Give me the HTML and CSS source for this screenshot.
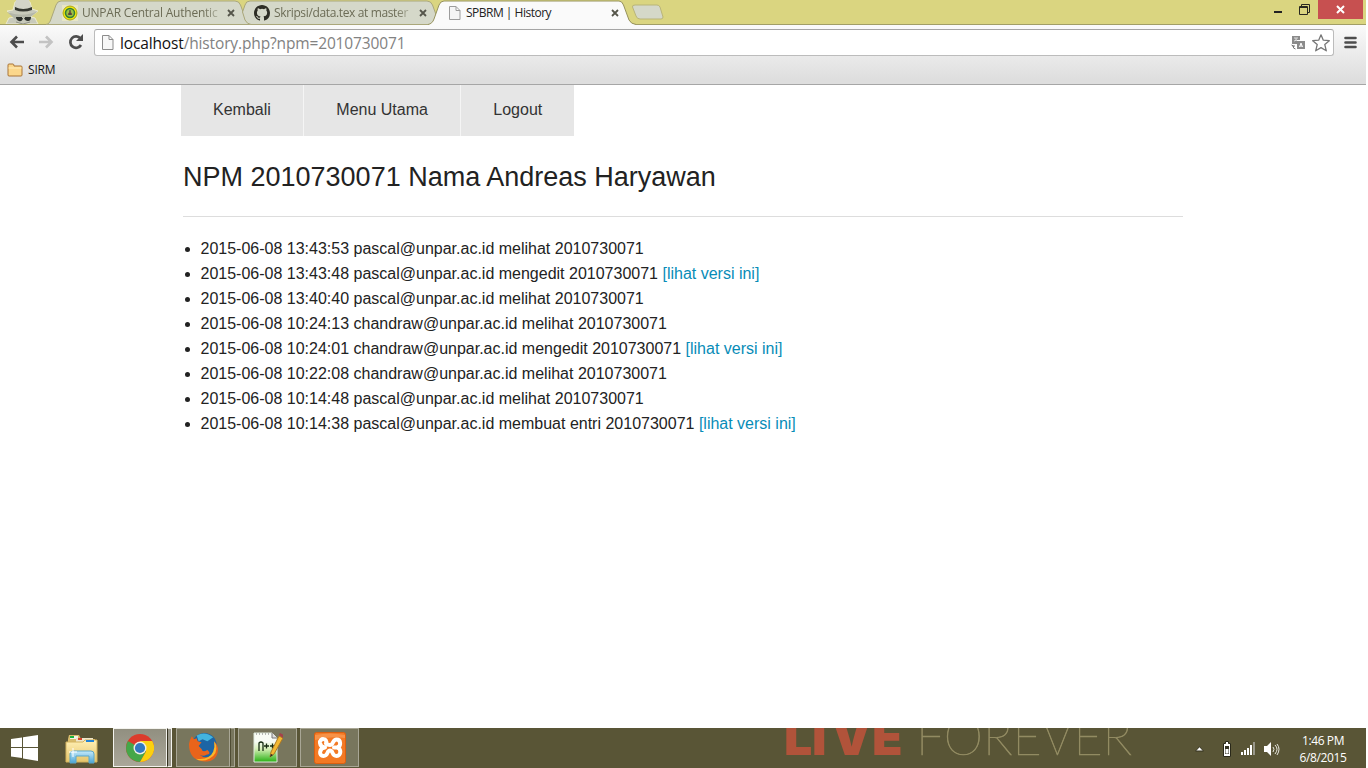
FILE: index.html
```html
<!DOCTYPE html>
<html lang="id">
<head>
<meta charset="utf-8">
<title>SPBRM | History</title>
<link rel="stylesheet" href="styles.css">
</head>
<body>
<div class="screen">
<header class="tabstrip">
  <svg class="incognito" width="42" height="24" viewBox="0 0 42 24">
    <path d="M6 24l3-6 5-1-3-3-4-3 6-1 2-8q8-3 15 0l2 7 6 2-4 3-3 3 4 1 3 6z" fill="#c8cabb" stroke="#ecebce"/>
    <path d="M15 8l1-8h13l2 8q-8 3-16 0" fill="#d3d4c8"/>
    <path d="M15 7q8 4 17 0v3q-9 3-17 0z" fill="#353831"/>
    <path d="M7 12q16 6 31-1l-6 5-6 3-4-2-7 2z" fill="#b3b6a8"/>
    <path d="M16 17h6v1h3v-1h6q0 4-3 4t-4-3h-1q-1 4-4 3t-3-4" fill="#2c302b"/>
    <path d="M16 22l7 2 7-2" fill="none" stroke="#8d9086"/>
  </svg>
  <div class="tab tab-first">
    <svg class="tab-shape" width="206" height="25"><path d="M-2 24.500C1 24 2 22 3 19L8 5Q9.500 1 13 1H187Q191 1 192.500 5L198 20Q200 24 204 24.500z" fill="#d5d8c9" stroke="#aaa77a"/></svg>
    <svg class="favicon" width="16" height="16"><rect width="16" height="16" fill="#e8e6c6"/><circle cx="8" cy="8" r="7" fill="#eee60b" stroke="#aaa51b"/><circle cx="8" cy="8" r="4.500" fill="#9ac342" stroke="#327c36" stroke-width="1.500"/><path d="M8 5L5.500 10h5z" fill="#b36c39"/><path d="M6 9h4M8 5v5" stroke="#31423a"/></svg>
    <span class="tab-title fade unpar">UNPAR Central Authentic</span>
    <svg class="tab-close" width="8" height="8"><path d="M1 1l6 6M7 1L1 7"/></svg>
  </div>
  <div class="tab">
    <svg class="tab-shape" width="206" height="25"><path d="M5 5Q6 1 10 1H187Q191 1 192.500 5L198 20Q200 24 204 24.500H11Q7 24 5 20L2.500 12z" fill="#d5d8c9" stroke="#aaa77a"/></svg>
    <svg class="favicon" width="16" height="16" viewBox="0 0 16 16"><path fill="#2d2d25" d="M8 0C3.580 0 0 3.580 0 8c0 3.540 2.290 6.530 5.470 7.590.4.070.55-.17.55-.38v-1.490c-2.010.37-2.530-.49-2.690-.94-.09-.23-.48-.94-.82-1.130-.28-.15-.68-.52-.01-.53.63-.01 1.080.58 1.230.82.72 1.210 1.870.87 2.330.66.070-.52.28-.87.51-1.070-1.780-.2-3.640-.89-3.640-3.950 0-.87.31-1.590.82-2.150-.08-.2-.36-1.020.08-2.120 0 0 .67-.21 2.200.82a7.500 7.500 0 0 1 4 0c1.530-1.040 2.200-.82 2.200-.82.44 1.100.16 1.920.08 2.120.51.56.82 1.270.82 2.150 0 3.070-1.870 3.750-3.650 3.950.29.25.54.73.54 1.480v2.200c0 .21.15.46.55.38A8 8 0 0 0 16 8c0-4.420-3.580-8-8-8z"/></svg>
    <span class="tab-title fade skripsi">Skripsi/data.tex at master</span>
    <svg class="tab-close" width="8" height="8"><path d="M1 1l6 6M7 1L1 7"/></svg>
  </div>
  <div class="tab active">
    <svg class="tab-shape" width="206" height="25"><path d="M-4 24.500C-1 24 1 22 2 19L7 5Q8.500 1 12 1H187Q190 1 191.500 5L197 20Q199 24 204 24.500V25H-4z" fill="#fafafa"/><path d="M-4 24.500C-1 24 1 22 2 19L7 5Q8.500 1 12 1H187Q190 1 191.500 5L197 20Q199 24 204 24.500" fill="none" stroke="#96925c"/></svg>
    <svg class="favicon page-icon" width="12" height="14"><path d="M.5.5h6.500l4 4v9H.5zM7 .5v4h4" fill="#f5f5f5" stroke="#9c9c9c"/></svg>
    <span class="tab-title spbrm">SPBRM | History</span>
    <svg class="tab-close" width="8" height="8"><path d="M1 1l6 6M7 1L1 7"/></svg>
  </div>
  <svg class="new-tab" width="33" height="17"><path d="M1.500 3Q1 1 4 1h22q2 0 3 2l3 10q0 2-2 2H9q-3 0-4-3z" fill="#d5d8c9" stroke="#b9b579"/></svg>
  <div class="window-controls">
    <svg class="minimize" width="8" height="2"><path d="M0 1h8" stroke="#222" stroke-width="2"/></svg>
    <svg class="restore" width="11" height="11"><path d="M2.500 2V.5h8v8H9M.5 2.500h8v8h-8zM.5 3.500h8" fill="none" stroke="#282820"/></svg>
    <div class="close"><svg width="9" height="9"><path d="M1 1l7 7M8 1L1 8" stroke="#fff" stroke-width="2"/></svg></div>
  </div>
</header>
<div class="toolbar">
  <nav class="address-row">
    <svg class="back" width="16" height="14"><path d="M15 7H2M8 1.500L2.500 7 8 12.500" fill="none" stroke="#4d4d4d" stroke-width="2.600"/></svg>
    <svg class="forward" width="16" height="14"><path d="M1 7h13M8 1.500L13.500 7 8 12.500" fill="none" stroke="#c3c3c3" stroke-width="2.600"/></svg>
    <svg class="reload" width="16" height="16"><path d="M12.500 4.500A5.700 5.700 0 1 0 13 11" fill="none" stroke="#4d4d4d" stroke-width="2.700"/><path d="M15 0v7H8z" fill="#4d4d4d"/></svg>
    <div class="omnibox">
      <svg class="url-icon" width="12" height="15"><path d="M.5.500h6.500l4 4v10H.5zM7 .5v4h4" fill="#f7f7f7" stroke="#8c8c8c"/></svg>
      <span class="url"><b>localhost</b>/history.php?npm=2010730071</span>
      <svg class="translate" width="15" height="15"><path d="M1 1h8v4H6v4H1z" fill="#8b8b8b"/><rect x="6" y="6" width="8" height="8" fill="#8b8b8b"/><path d="M3 3h4M5 3v3M3 6l3-1" stroke="#ddd"/><path d="M8.500 12L10 8l1.500 4M9 11h2" stroke="#fff" fill="none"/><path d="M.5 10l2 1v2l2 1M4 11H1" stroke="#777" fill="none"/></svg>
      <svg class="star" width="18" height="18"><path d="M9 .8l2.300 5.400 6 .5-4.500 3.900 1.500 6.200L9 13.600l-5.300 3.200 1.500-6.200L.7 6.700l6-.5z" fill="#fff" stroke="#777" stroke-width="1.300" stroke-linejoin="round"/></svg>
    </div>
    <svg class="menu" width="13" height="13"><path d="M1.500 2h10M1.500 6.500h10M1.500 11h10" stroke="#4d4d4d" stroke-width="2.600" stroke-linecap="round"/></svg>
  </nav>
  <div class="bookmarks">
    <svg width="16" height="14"><path d="M1 12.500V2q0-1 1-1h4q1 0 1 2h7q1 0 1 1v8q0 1-1 1H2z" fill="#fbd78c" stroke="#a97438"/><path d="M1.500 5h13" stroke="#ffedba"/></svg>
    <span>SIRM</span>
  </div>
</div>
<main class="page">
  <nav class="menu-bar"><a>Kembali</a><a>Menu Utama</a><a>Logout</a></nav>
  <section class="content">
    <h3>NPM 2010730071 Nama Andreas Haryawan</h3>
    <hr>
    <ul>
      <li>2015-06-08 13:43:53 pascal@unpar.ac.id melihat 2010730071</li>
      <li>2015-06-08 13:43:48 pascal@unpar.ac.id mengedit 2010730071 <a>[lihat versi ini]</a></li>
      <li>2015-06-08 13:40:40 pascal@unpar.ac.id melihat 2010730071</li>
      <li>2015-06-08 10:24:13 chandraw@unpar.ac.id melihat 2010730071</li>
      <li>2015-06-08 10:24:01 chandraw@unpar.ac.id mengedit 2010730071 <a>[lihat versi ini]</a></li>
      <li>2015-06-08 10:22:08 chandraw@unpar.ac.id melihat 2010730071</li>
      <li>2015-06-08 10:14:48 pascal@unpar.ac.id melihat 2010730071</li>
      <li>2015-06-08 10:14:38 pascal@unpar.ac.id membuat entri 2010730071 <a>[lihat versi ini]</a></li>
    </ul>
  </section>
</main>
<footer class="taskbar">
  <svg class="start" width="27" height="26"><path d="M0 4l11-1.500V12H0zM12 2.300L27 0v12H12zM0 13h11v10L0 21.500zM12 13h15v13l-15-2.600z" fill="#fff"/></svg>
  <svg class="explorer" width="34" height="30">
    <defs><linearGradient id="fold" y2="1" x2="0"><stop stop-color="#fff0b5"/><stop offset="1" stop-color="#e6c56b"/></linearGradient><linearGradient id="glass" y2="1" x2="0"><stop stop-color="#c5eafa"/><stop offset="1" stop-color="#4ba4d6"/></linearGradient></defs>
    <path d="M3 5l1-4h10l2 4h14v22H2z" fill="#d9bc6c"/><path d="M5 2h8v3H5z" fill="#f4f4e8"/><path d="M5 2h4v2H5z" fill="#1cb43d"/><path d="M11 4h17v5H11z" fill="#eee6cb"/><path d="M13 4h4v2h-4z" fill="#d9442b"/>
    <path d="M1 8h17l2-2h12v22H1z" fill="url(#fold)" stroke="#d4b45f"/><path d="M21 6h8v2h-8z" fill="#2383d5"/>
    <path d="M5 29V20q0-3 3-3h18q3 0 3 3v9h-5v-7H11v7z" fill="url(#glass)" stroke="#5aa7c9"/><path d="M8 14v9M4 18h8" stroke="#fff"/>
  </svg>
  <div class="task grouped current"><svg width="28" height="28" viewBox="0 0 28 28"><circle cx="14" cy="14" r="14" fill="#dc3b2c"/><path d="M14 14L1.900 7A14 14 0 0 0 14 28l6-10.500z" fill="#45a749"/><path d="M14 7h12.200A14 14 0 0 1 14 28l6-10.500z" fill="#fbd00f"/><circle cx="14" cy="14" r="6.500" fill="#efefe7"/><circle cx="14" cy="14" r="5.100" fill="#3279c1"/></svg></div>
  <div class="edge current-edge"></div>
  <div class="task grouped firefox"><svg width="30" height="31" viewBox="0 0 31 31"><circle cx="17" cy="13" r="12.500" fill="#1d65a5"/><path d="M9 3q9-5 17 2l-6 4-5-2-4 2z" fill="#43b4df"/><path d="M1 12Q2 7 4 4l2 3 3-1 1 3 4 1-3 4 3 3q1 4 6 1 5 4-1 5-3 2-7 0 6 5 12 1 7-5 3-15 4 4 4 9-1 12-14 12Q1 29 1 12z" fill="#e9641b"/><path d="M27 9l2 4q2 10-7 14-8 4-14 0 14 2 18-7 2-5 1-11z" fill="#fbb62a"/></svg></div>
  <div class="edge"></div>
  <div class="task notepad"><svg width="31" height="31" viewBox="0 0 31 31"><defs><linearGradient id="note" y2="1" x2="0"><stop offset=".3" stop-color="#f8fcf5"/><stop offset=".55" stop-color="#d5efb5"/><stop offset="1" stop-color="#27b013"/></linearGradient></defs><path d="M2 1h18l5 5v24H2z" fill="url(#note)" stroke="#dfe9dd"/><path d="M4 2h15" stroke="#777" stroke-dasharray="1 2"/><path d="M20 1v5h5" fill="#ddd" stroke="#777"/><path d="M7 19v-8q2-2 4 0v8M12 14h5M14.500 11.500v5M18 14h5M20.500 11.500v5" fill="none" stroke="#172c13" stroke-width="1.300"/><path d="M18 25l1-5L27 4l4 2-9 16z" fill="#f4b932" stroke="#ad7925"/><path d="M27 3l1-2 4 2-1 3z" fill="#a44249"/><path d="M18 25l1-3 2 1z" fill="#222"/></svg></div>
  <div class="task xampp"><svg width="32" height="32"><rect x=".5" y=".5" width="31" height="31" rx="2" fill="#f37924" stroke="#db5f10"/><path d="M1 3Q16 0 31 3V6Q15 4 1 8z" fill="#f79248"/><path d="M12 11.500C14 6 5.500 5.500 6 11Q6.500 15 11 15.500M11 15.500C5 16 4.500 24 9.500 24C14.500 24 12.500 18.500 16 18.500S17.500 24 22.500 24C27.500 24 27.500 16 23 15.500C27.500 14.500 27 7.500 22.500 7.500C18.500 7.500 19.500 13 16 13Q13.500 13 12 11.500M20 15.500H23" fill="none" stroke="#fff" stroke-width="4" stroke-linejoin="round" stroke-linecap="round"/></svg></div>
  <svg class="wallpaper" width="360" height="40">
    <text class="live" x="1 29 48.500 89" y="27">LIVE</text>
    <text class="forever" x="133" y="27" textLength="216" lengthAdjust="spacingAndGlyphs">FOREVER</text>
  </svg>
  <div class="tray">
    <svg class="up" width="9" height="6"><path d="M.5 5L4.500.7 8.500 5z" fill="#fff" stroke="#35331f"/></svg>
    <svg class="battery" width="10" height="16"><path d="M3.500 2.500v-2h3v2h2v13h-7v-13z" fill="#fff" stroke="#292819"/><rect x="3" y="5" width="4" height="8" fill="#343324"/><rect x="3.500" y="8" width="3" height="4.500" fill="#fff"/></svg>
    <svg class="signal" width="16" height="13"><path d="M1 10h2v3H1zM4 8h2v5H4zM7 6h2v7H7zM10 3h2v10h-2z" fill="#fff"/><path d="M13 0h2v13h-2z" fill="#99978a"/></svg>
    <svg class="volume" width="16" height="15"><path d="M0 4h3l4-4v14l-4-4H0z" fill="#fff"/><path d="M9 5q2 2 0 5M11 3q4 4 0 9M13 2q4 5 0 11" fill="none" stroke="#e8e8df"/></svg>
    <div class="clock"><span>1:46 PM</span><span class="date">6/8/2015</span></div>
  </div>
</footer>
</div>
</body>
</html>
```

FILE: styles.css
```css
* { box-sizing: border-box; }
body { margin: 0; background: #fff; font-family: "Liberation Sans", Arial, sans-serif; overflow: hidden; }
svg { display: block; flex: none; }
.screen { width: 1366px; height: 768px; display: flex; flex-direction: column; }
.tabstrip { height: 25px; flex: none; display: flex; background: #dad580; border-bottom: 1px solid #a19e65; font: 12px "Open Sans", "Noto Sans", sans-serif; }
.incognito { width: 42px; margin-right: 2px; }
.tab { position: relative; width: 192px; height: 25px; display: flex; align-items: center; padding-left: 14px; color: #6c6c56; }
.tab-first { margin-left: 4px; }
.tab-shape { position: absolute; left: 0; top: 0; overflow: visible; }
.favicon { position: relative; }
.tab-title { position: relative; width: 138px; margin-left: 4px; white-space: nowrap; line-height: 18px; }
.unpar { letter-spacing: -.22px; }
.skripsi { letter-spacing: -.36px; }
.fade { -webkit-mask-image: linear-gradient(to right, #000 88%, rgba(0,0,0,.25)); mask-image: linear-gradient(to right, #000 88%, rgba(0,0,0,.25)); }
.tab-close { position: relative; margin-left: 7px; fill: none; stroke: #55554a; stroke-width: 1.8; }
.active { z-index: 1; color: #222; width: 201px; padding-left: 17px; }
.active .tab-title { margin-left: 5px; width: 145px; letter-spacing: -.5px; }
.active .tab-close { margin-left: 0; }
.active .page-icon { margin: 0; }
.new-tab { margin: 4px 0 0 -2px; }
.window-controls { margin-left: auto; display: flex; height: 19px; }
.minimize { margin-top: 11px; }
.restore { margin: 4px 8px 0 17px; }
.close { width: 45px; height: 19px; display: flex; align-items: center; justify-content: center; background: #c75050; margin-right: 3px; }
.toolbar { height: 60px; flex: none; background: linear-gradient(#fafafa, #dedede 55px); border-bottom: 1px solid #a6a6a6; }
.address-row { height: 33px; display: flex; align-items: center; padding: 2px 9px 0 9px; }
.back, .forward, .reload { margin-bottom: 2px; }
.forward { margin-left: 13px; }
.reload { margin-left: 14px; }
.omnibox { height: 27px; flex: 1; display: flex; align-items: center; margin: 0 10px; border: 1px solid #bcbcbc; border-top-color: #a5a5a5; border-radius: 3px; background: #fff; padding: 0 3px 0 7px; font: 15.5px "Open Sans", "Noto Sans", sans-serif; }
.url { color: #828282; margin-left: 6px; letter-spacing: -.14px; line-height: 24px; }
.url b { font-weight: 400; color: #111; }
.translate { margin-left: auto; }
.star { margin-left: 6px; }
.bookmarks { display: flex; align-items: center; gap: 5px; height: 24px; padding: 0 0 1px 7px; font: 12px "Open Sans", sans-serif; color: #151515; letter-spacing: -.2px; }
.page { flex: 1; background: #fff; }
.menu-bar { display: flex; width: 393px; height: 51px; margin-left: 181px; background: #e6e6e6; }
.menu-bar a { padding: 0 32px; line-height: 49px; color: #333; font-size: 16px; border-right: 1px solid #f5f5f5; white-space: nowrap; }
.menu-bar a:nth-child(2) { width: 157px; padding-left: 32.5px; }
.menu-bar a:last-child { border: 0; padding-left: 32.5px; }
.content { width: 1000px; margin-left: 183px; color: #222; }
h3 { font-size: 27px; line-height: 38px; font-weight: 400; margin: 22px 0 20px; }
hr { border: 0; border-top: 1px solid #ddd; margin: 0 0 19px; }
ul { margin: 0; padding: 0 0 0 17.5px; }
li { line-height: 25px; font-size: 16px; }
li a { color: #078cb7; }
.taskbar { height: 40px; flex: none; display: flex; background: #595536; overflow: hidden; }
.start { margin: 7px 0 0 11px; }
.explorer { margin: 6px 0 0 27px; }
.task { width: 59px; height: 39px; display: flex; align-items: center; justify-content: center; border: 1px solid #a8a695; background: #78765d; }
.grouped { width: 54px; }
.edge { width: 5px; height: 39px; border: 1px solid #a8a695; border-left-color: #4f4c33; background: #78765d; }
.current { margin-left: 14px; background: linear-gradient(#918f80, #aaa799); border-color: #f3f3ee; }
.current-edge { border-color: #f3f3ee #f3f3ee #f3f3ee #34311f; background: #99978a; }
.firefox { margin-left: 4px; }
.notepad, .xampp { margin-left: 3px; }
.wallpaper { margin-left: 424px; }
.live { font: 900 50px Inter, "Liberation Sans", sans-serif; fill: #b1533a; }
.forever { font: 100 51px Lato, sans-serif; fill: #928b62; stroke: #928b62; stroke-width: .7; }
.tray { margin-left: auto; display: flex; color: #fff; }
.up { margin-top: 18px; }
.battery { margin: 13px 0 0 18px; }
.signal { margin: 14px 0 0 8px; }
.volume { margin: 14px 0 0 8px; }
.clock { width: 86px; display: flex; flex-direction: column; align-items: center; padding-top: 4px; font: 12px/17px "Open Sans", sans-serif; letter-spacing: -.4px; }
```
